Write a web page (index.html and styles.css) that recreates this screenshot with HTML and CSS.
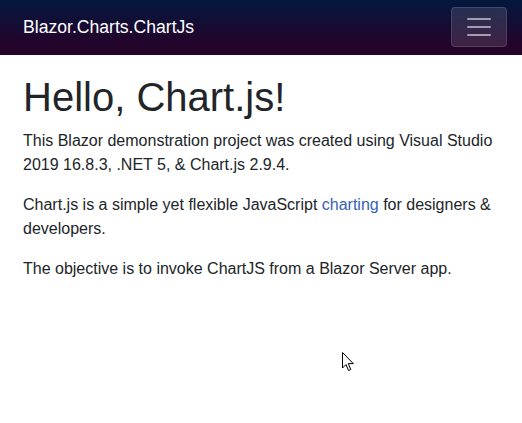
FILE: index.html
```html
<!DOCTYPE html>
<html lang="en">
<head>
<meta charset="utf-8">
<title>Blazor.Charts.ChartJs</title>
<link rel="stylesheet" href="styles.css">
</head>
<body>
<div class="page">
  <header class="top-row">
    <a class="brand" href="#">Blazor.Charts.ChartJs</a>
    <button class="toggler" type="button" aria-label="Toggle navigation">
      <svg class="toggler-icon" width="30" height="30" viewBox="0 0 30 30">
        <path d="M4 7h22M4 15h22M4 23h22" stroke="rgba(255,255,255,0.55)" stroke-width="2" stroke-linecap="round" fill="none"/>
      </svg>
    </button>
  </header>
  <main class="content">
    <h1>Hello, Chart.js!</h1>
    <p>This Blazor demonstration project was created using Visual Studio 2019 16.8.3, .NET 5, &amp; Chart.js 2.9.4.</p>
    <p>Chart.js is a simple yet flexible JavaScript <a href="#">charting</a> for designers &amp; developers.</p>
    <p>The objective is to invoke ChartJS from a Blazor Server app.</p>
  </main>
</div>
<svg class="cursor" width="13" height="20" viewBox="0 0 13 20">
  <path d="M0.5 0.5 L0.5 16 L4 12.5 L6.5 18.5 L8.8 17.5 L6.3 11.6 L11.3 11.6 Z" fill="#fff" stroke="#000" stroke-width="1" stroke-linejoin="miter"/>
</svg>
</body>
</html>
```

FILE: styles.css
```css
html, body {
  margin: 0;
  padding: 0;
  background: #ffffff;
  font-family: "Liberation Sans", Arial, Helvetica, sans-serif;
  color: #212529;
}

.page {
  display: flex;
  flex-direction: column;
}

.top-row {
  height: 55px;
  display: flex;
  align-items: center;
  justify-content: space-between;
  padding: 0 15px 0 23px;
  background-image:
    linear-gradient(rgba(0, 0, 0, 0.4), rgba(0, 0, 0, 0.4)),
    linear-gradient(180deg, rgb(5, 39, 103) 0%, #3a0647 80%);
}

.brand {
  color: #ffffff;
  font-size: 17.6px;
  text-decoration: none;
  line-height: 1;
}

.toggler {
  width: 56px;
  height: 40px;
  margin-top: -2px;
  padding: 0;
  display: flex;
  align-items: center;
  justify-content: center;
  background-color: rgba(255, 255, 255, 0.12);
  border: 1px solid rgba(255, 255, 255, 0.12);
  border-radius: 4px;
}

.toggler-icon {
  display: block;
}

.content {
  padding: 17.6px 24px 0 23px;
}

h1 {
  margin: 0 0 8px;
  font-size: 40px;
  font-weight: 400;
  line-height: 1.2;
}

p {
  margin: 0 0 16px;
  font-size: 16px;
  line-height: 24px;
}

a {
  color: #3462b5;
  text-decoration: none;
}

.cursor {
  position: absolute;
  left: 342px;
  top: 352px;
}
```
